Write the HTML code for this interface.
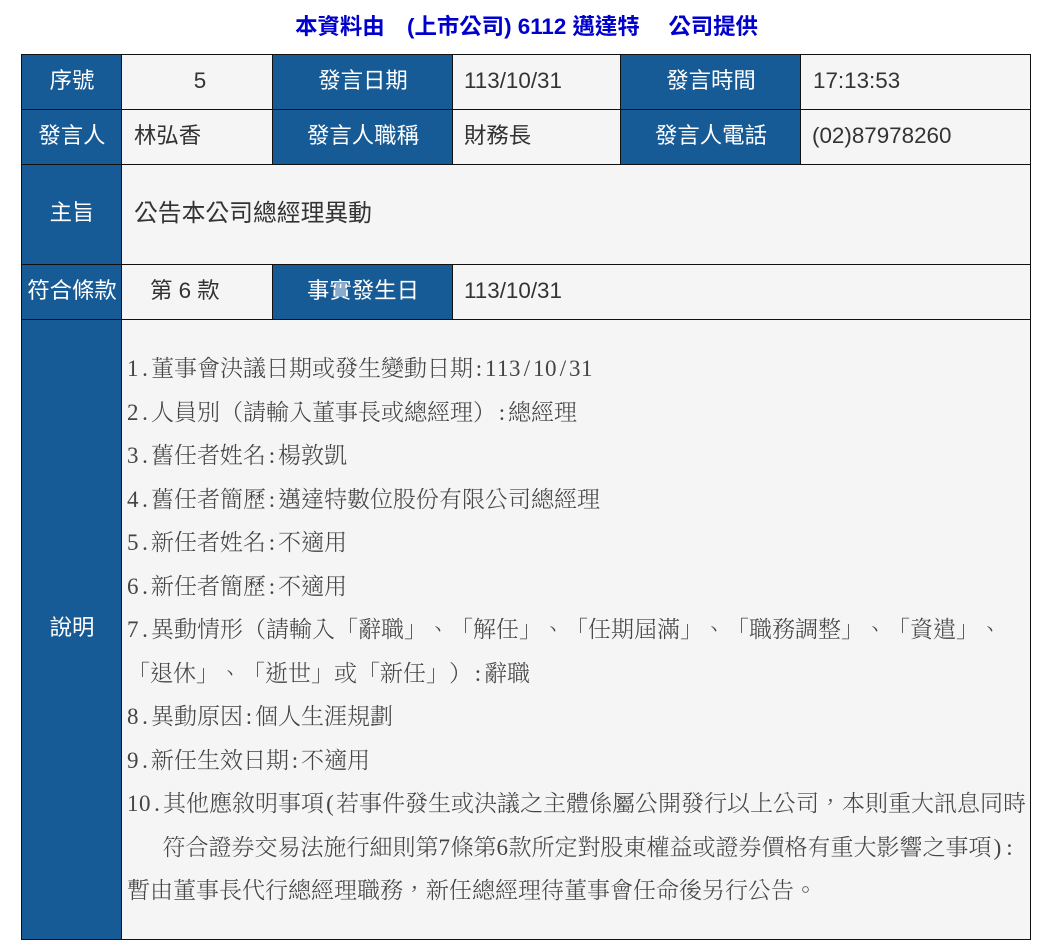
<!DOCTYPE html>
<html lang="zh-TW">
<head>
<meta charset="utf-8">
<title>公開資訊</title>
<style>
html,body{margin:0;padding:0;background:#fff;}
body{width:1064px;height:949px;position:relative;overflow:hidden;font-family:"Liberation Sans","Noto Sans CJK TC",sans-serif;}
.c{position:absolute;box-sizing:border-box;background:#f5f5f5;}
.h{background:#165a96;}
.t{position:absolute;font-size:22.4px;line-height:30px;height:30px;white-space:nowrap;color:#333;}
.l{color:#fff;text-align:center;}
.ln{position:absolute;left:127px;height:30px;line-height:30px;font-family:"Liberation Serif","Noto Serif CJK TC","Noto Serif CJK SC",serif;font-size:23px;font-weight:300;letter-spacing:0;color:#444;white-space:nowrap;text-spacing-trim:space-all;font-kerning:none;}
.p{display:inline-block;width:12px;text-align:center;letter-spacing:0;}
.n{letter-spacing:.5px;}
.b{position:absolute;background:#111;}
.title{position:absolute;left:0;width:1053px;top:11px;text-align:center;font-size:22.4px;line-height:32px;font-weight:bold;color:#0000cc;white-space:pre;}
</style>
</head>
<body>
<div class="title">本資料由　(上市公司) 6112 邁達特　 公司提供</div>

<div class="c" style="left:21px;top:54px;width:1010px;height:886px;"></div>
<div class="c h" style="left:21px;top:54px;width:100px;height:886px;"></div>
<div class="c h" style="left:272px;top:54px;width:180px;height:110px;"></div>
<div class="c h" style="left:620px;top:54px;width:180px;height:110px;"></div>
<div class="c h" style="left:272px;top:264px;width:180px;height:55px;"></div>

<div class="b" style="left:21px;top:54px;width:1010px;height:1px;"></div>
<div class="b" style="left:21px;top:109px;width:1010px;height:1px;"></div>
<div class="b" style="left:21px;top:164px;width:1010px;height:1px;"></div>
<div class="b" style="left:21px;top:264px;width:1010px;height:1px;"></div>
<div class="b" style="left:21px;top:319px;width:1010px;height:1px;"></div>
<div class="b" style="left:21px;top:939px;width:1010px;height:1px;"></div>
<div class="b" style="left:21px;top:54px;width:1px;height:886px;"></div>
<div class="b" style="left:121px;top:54px;width:1px;height:886px;"></div>
<div class="b" style="left:272px;top:54px;width:1px;height:110px;"></div>
<div class="b" style="left:272px;top:264px;width:1px;height:56px;"></div>
<div class="b" style="left:452px;top:54px;width:1px;height:110px;"></div>
<div class="b" style="left:452px;top:264px;width:1px;height:56px;"></div>
<div class="b" style="left:620px;top:54px;width:1px;height:110px;"></div>
<div class="b" style="left:800px;top:54px;width:1px;height:110px;"></div>
<div class="b" style="left:1030px;top:54px;width:1px;height:886px;"></div>

<div class="t l" style="left:22.5px;width:99px;top:66px;">序號</div>
<div class="t" style="left:125px;width:150px;top:66px;text-align:center;">5</div>
<div class="t l" style="left:273.5px;width:179px;top:66px;">發言日期</div>
<div class="t" style="left:464px;top:66px;">113/10/31</div>
<div class="t l" style="left:621.5px;width:179px;top:66px;">發言時間</div>
<div class="t" style="left:813px;top:66px;">17:13:53</div>

<div class="t l" style="left:22.5px;width:99px;top:121px;">發言人</div>
<div class="t" style="left:134px;top:121px;">林弘香</div>
<div class="t l" style="left:273.5px;width:179px;top:121px;">發言人職稱</div>
<div class="t" style="left:464px;top:121px;">財務長</div>
<div class="t l" style="left:621.5px;width:179px;top:121px;">發言人電話</div>
<div class="t" style="left:812px;top:121px;">(02)87978260</div>

<div class="t l" style="left:22.5px;width:99px;top:198px;">主旨</div>
<div class="t" style="left:134px;top:199px;font-size:23.8px;">公告本公司總經理異動</div>

<div class="t l" style="left:22.5px;width:99px;top:276px;">符合條款</div>
<div class="t" style="left:150px;top:276px;">第 6 款</div>
<div class="t l" style="left:273.5px;width:179px;top:276px;">事實發生日</div>
<div class="t" style="left:464px;top:276px;">113/10/31</div>

<div class="t l" style="left:22.5px;width:99px;top:613px;">說明</div>

<div class="ln" style="top:354px;"><span class="n">1</span><span class="p">.</span>董事會決議日期或發生變動日期<span class="p">:</span><span class="n">113</span><span class="p">/</span><span class="n">10</span><span class="p">/</span><span class="n">31</span></div>
<div class="ln" style="top:397.5px;"><span class="n">2</span><span class="p">.</span>人員別（請輸入董事長或總經理）<span class="p">:</span>總經理</div>
<div class="ln" style="top:441px;"><span class="n">3</span><span class="p">.</span>舊任者姓名<span class="p">:</span>楊敦凱</div>
<div class="ln" style="top:484.5px;"><span class="n">4</span><span class="p">.</span>舊任者簡歷<span class="p">:</span>邁達特數位股份有限公司總經理</div>
<div class="ln" style="top:528px;"><span class="n">5</span><span class="p">.</span>新任者姓名<span class="p">:</span>不適用</div>
<div class="ln" style="top:571.5px;"><span class="n">6</span><span class="p">.</span>新任者簡歷<span class="p">:</span>不適用</div>
<div class="ln" style="top:615px;"><span class="n">7</span><span class="p">.</span>異動情形（請輸入「辭職」、「解任」、「任期屆滿」、「職務調整」、「資遣」、</div>
<div class="ln" style="top:658.5px;">「退休」、「逝世」或「新任」）<span class="p">:</span>辭職</div>
<div class="ln" style="top:702px;"><span class="n">8</span><span class="p">.</span>異動原因<span class="p">:</span>個人生涯規劃</div>
<div class="ln" style="top:745.5px;"><span class="n">9</span><span class="p">.</span>新任生效日期<span class="p">:</span>不適用</div>
<div class="ln" style="top:789px;"><span class="n">10</span><span class="p">.</span>其他應敘明事項<span class="p">(</span>若事件發生或決議之主體係屬公開發行以上公司，本則重大訊息同時</div>
<div class="ln" style="top:832.5px;left:162.5px;">符合證券交易法施行細則第<span class="n">7</span>條第<span class="n">6</span>款所定對股東權益或證券價格有重大影響之事項<span class="p">)</span><span class="p">:</span></div>
<div class="ln" style="top:876px;">暫由董事長代行總經理職務，新任總經理待董事會任命後另行公告。</div>
</body>
</html>
